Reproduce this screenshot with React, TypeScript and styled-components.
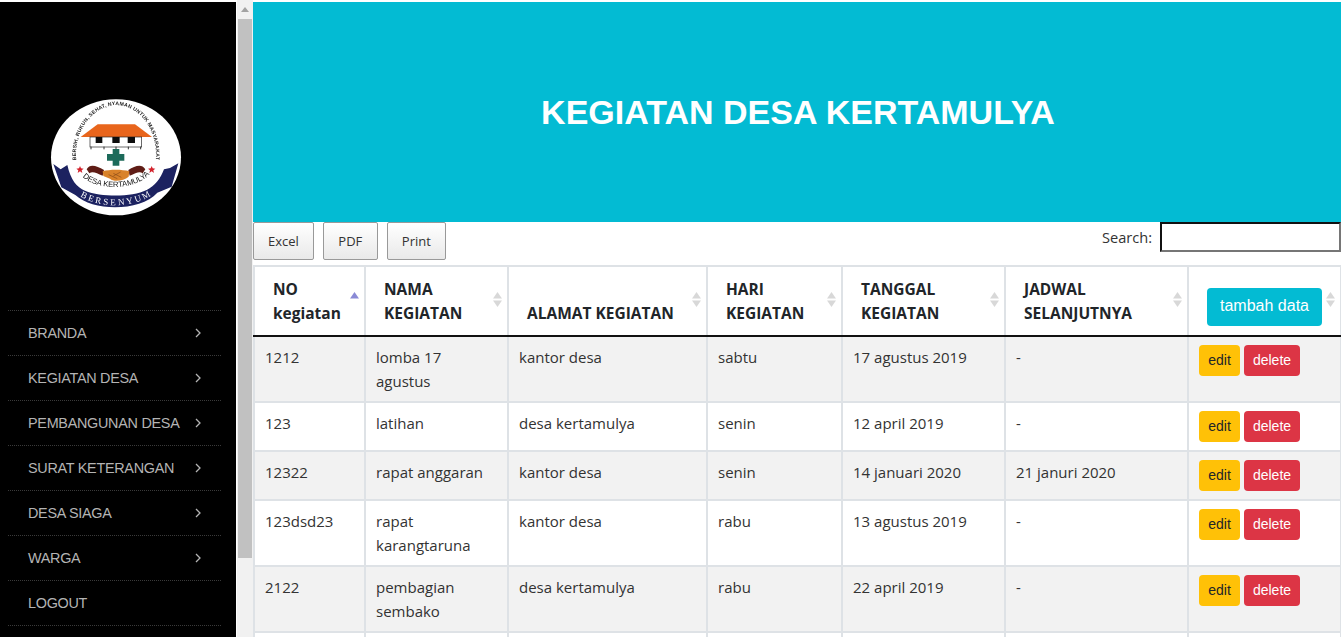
import React from 'react';
import styled, { createGlobalStyle } from 'styled-components';

const Global = createGlobalStyle`
  html, body { margin: 0; padding: 0; height: 637px; overflow: hidden; background: #fff; }
  * { box-sizing: border-box; }
`;
const Page = styled.div`
  display: flex; width: 1341px; height: 637px; overflow: hidden; background: #fff;
  font-family: "Open Sans", "Noto Sans", sans-serif; color: #212529;
`;
const Sidebar = styled.aside`
  flex: 0 0 236px; height: 635px; margin-top: 2px; background: #000; padding: 78px 15px 0 8px;
`;
const LogoBox = styled.div` height: 230px; margin-left: 22px; `;
const Nav = styled.nav` border-top: 1px dotted #3a3a3a; `;
const NavItem = styled.a`
  display: flex; align-items: center; justify-content: space-between; height: 45px;
  padding: 0 19px 0 20px; border-bottom: 1px dotted #3a3a3a;
  font: 14.4px "Liberation Sans", Arial, sans-serif; color: #b4b4b4; letter-spacing: -0.28px;
`;
const Scrollbar = styled.div`
  flex: 0 0 16px; margin-left: 1px; height: 637px; background: #f1f1f1; padding: 0 1px; position: relative;
`;
const ScrollArrow = styled.div`
  height: 19px; display: flex; align-items: center; justify-content: center;
`;
const ScrollThumb = styled.div` height: 539px; background: #c1c1c1; `;
const Main = styled.main` flex: 1; min-width: 0; `;
const Banner = styled.header`
  margin-top: 2px; height: 220px; background: #03bbd3; display: flex; align-items: center; justify-content: center;
  padding-left: 2px;
`;
const Title = styled.h1`
  margin: 0; font: bold 34px "Liberation Sans", Arial, sans-serif; color: #fff;
`;
const Toolbar = styled.div` display: flex; align-items: flex-start; height: 43px; `;
const ExportGroup = styled.div` display: flex; gap: 9px; flex: 1; `;
const ExportButton = styled.button`
  height: 38px; min-width: 55px; padding: 0 14px; border: 1px solid #999; border-radius: 2px;
  background: linear-gradient(to bottom, #fff 0%, #e9e9e9 100%);
  font: 13px "Open Sans", sans-serif; color: #333;
`;
const SearchLabel = styled.label`
  display: flex; align-items: flex-start; gap: 8px; font-size: 14.6px; color: #333; line-height: 30px;
`;
const SearchInput = styled.input`
  width: 181px; height: 30px; background: #fff; border: 2px solid; padding: 0; outline: 0;
  border-color: #111 #767676 #767676 #111;
`;
const Table = styled.table`
  table-layout: fixed; border-collapse: collapse; width: 1087px; margin-left: 0;
  font-size: 15px; line-height: 24px;
`;
const Head = styled.th`
  position: relative; border: 2px solid #dee2e6; border-bottom: 2px solid #111; text-align: left; vertical-align: bottom;
  padding: 8px 18px 10px 18px; font-weight: 700; height: 70px; color: #212529; font-size: 15.5px;
`;
const HeadButtonCell = styled(Head)` padding: 12px 18px 0 18px; vertical-align: middle; `;
const SortMark = styled.svg`
  position: absolute; right: 5px; top: 25px; width: 9px; height: 15px;
`;
const Row = styled.tr<{ $odd: boolean }>` background: ${p => (p.$odd ? '#f2f2f2' : '#fff')}; `;
const Cell = styled.td`
  border: 2px solid #dee2e6; padding: 8px 10px; vertical-align: top; color: #333;
`;
const ActionCell = styled(Cell)` padding: 8px 10px; white-space: nowrap; font-size: 0; line-height: 0; `;
const ActionButton = styled.button<{ $kind: 'info' | 'warn' | 'danger' }>`
  border: 0; border-radius: 4px; font-family: "Liberation Sans", Arial, sans-serif;
  background: ${p => (p.$kind === 'info' ? '#03bbd3' : p.$kind === 'warn' ? '#ffc107' : '#dc3545')};
  color: ${p => (p.$kind === 'warn' ? '#212529' : '#fff')};
  font-size: ${p => (p.$kind === 'info' ? '16px' : '14px')};
  height: ${p => (p.$kind === 'info' ? '38px' : '31px')};
  width: ${p => (p.$kind === 'info' ? '115px' : p.$kind === 'warn' ? '41px' : '56px')};
  margin-right: ${p => (p.$kind === 'warn' ? '4px' : '0')};
  padding: 0 0 2px;
`;

const Logo = () => (
  <svg width="170" height="150" viewBox="0 0 510 450" role="img" aria-label="Logo Desa Kertamulya">
    <defs>
      <filter id="soft"><feGaussianBlur stdDeviation="0.9" /></filter>
      <path id="arcTop" d="M139 242 C130 150 190 78 258 75 C330 78 385 150 377 242" />
      <path id="arcMid" d="M160 292 C200 332 315 332 357 284" />
      <path id="arcBot" d="M140 342 C200 388 320 388 378 335" />
    </defs>
    <g filter="url(#soft)">
      <ellipse cx="258" cy="232" rx="195" ry="174" fill="#fff" />
      <path d="M70 252 L92 268 L112 255 C122 300 140 322 165 332 C215 352 305 352 350 330 C375 318 392 295 402 268 L420 264 L445 250 L425 320 L382 338 C330 395 190 395 136 345 L94 322 Z" fill="#1a2060" />
      <path d="M152 171 L203 133 L315 133 L366 171 Z" fill="#e8651a" />
      <rect x="180" y="171" width="155" height="30" fill="#fff" stroke="#222" strokeWidth="2" />
      <rect x="197" y="171" width="20" height="18" fill="#111" />
      <rect x="247" y="171" width="22" height="18" fill="#111" />
      <rect x="293" y="171" width="22" height="18" fill="#111" />
      <path d="M183 200 V208 M222 200 V208 M258 200 V208 M295 200 V208 M332 200 V208" stroke="#333" strokeWidth="3" />
      <path d="M248 207 H268 V222 H283 V242 H268 V257 H248 V242 H231 V222 H248 Z" fill="#1f6b5a" />
      <path d="M170 268 C180 250 200 258 222 270 L218 287 C200 280 188 272 178 280 Z" fill="#5e1f14" />
      <path d="M346 268 C335 250 315 258 295 270 L299 287 C318 280 328 272 338 280 Z" fill="#5e1f14" />
      <path d="M218 274 C240 268 275 268 298 274 L296 290 C280 304 250 306 240 296 L220 288 Z" fill="#d9822b" />
      <path d="M236 284 L262 296 M250 280 L274 292 M272 276 L250 288" stroke="#8a4a16" strokeWidth="2" />
      <path d="M150 258 L153 265 L161 266 L155 271 L157 279 L150 274 L143 279 L145 271 L139 266 L147 265 Z" fill="#d3212c" />
      <path d="M365 258 L368 265 L376 266 L370 271 L372 279 L365 274 L358 279 L360 271 L354 266 L362 265 Z" fill="#d3212c" />
      <text fontFamily="Liberation Sans, sans-serif" fontSize="15.5" fontWeight="700" fill="#222" letterSpacing="0.6">
        <textPath href="#arcTop" startOffset="50%" textAnchor="middle">BERSIH, RUKUN, SEHAT, NYAMAN UNTUK MASYARAKAT</textPath>
      </text>
      <text fontFamily="Liberation Sans, sans-serif" fontSize="23" fontWeight="400" fill="#111">
        <textPath href="#arcMid" startOffset="50%" textAnchor="middle">DESA KERTAMULYA</textPath>
      </text>
      <text fontFamily="Liberation Serif, serif" fontSize="27" fill="#fff" letterSpacing="7">
        <textPath href="#arcBot" startOffset="50%" textAnchor="middle">BERSENYUM</textPath>
      </text>
    </g>
  </svg>
);

const Chevron = () => (
  <svg width="8" height="10" viewBox="0 0 8 10" fill="none" stroke="#b4b4b4" strokeWidth="1.3">
    <path d="M2 1 L6 5 L2 9" />
  </svg>
);

const Sort = ({ active }: { active?: boolean }) => (
  <SortMark viewBox="0 0 9 15">
    <path d="M4.5 0 L9 6.5 H0 Z" fill={active ? '#8a8ad6' : '#d8d8d8'} />
    {!active && <path d="M4.5 15 L9 8.5 H0 Z" fill="#d8d8d8" />}
  </SortMark>
);

const menu = ['BRANDA', 'KEGIATAN DESA', 'PEMBANGUNAN DESA', 'SURAT KETERANGAN', 'DESA SIAGA', 'WARGA', 'LOGOUT'];
const widths = [111, 143, 199, 135, 163, 183, 153];
const heads: React.ReactNode[] = [
  <>NO<br />kegiatan</>,
  <>NAMA<br />KEGIATAN</>,
  'ALAMAT KEGIATAN',
  <>HARI<br />KEGIATAN</>,
  <>TANGGAL<br />KEGIATAN</>,
  <>JADWAL<br />SELANJUTNYA</>,
];
const rows: string[][] = [
  ['1212', 'lomba 17 agustus', 'kantor desa', 'sabtu', '17 agustus 2019', '-'],
  ['123', 'latihan', 'desa kertamulya', 'senin', '12 april 2019', '-'],
  ['12322', 'rapat anggaran', 'kantor desa', 'senin', '14 januari 2020', '21 januri 2020'],
  ['123dsd23', 'rapat karangtaruna', 'kantor desa', 'rabu', '13 agustus 2019', '-'],
  ['2122', 'pembagian sembako', 'desa kertamulya', 'rabu', '22 april 2019', '-'],
];

export default function App() {
  return (
    <Page>
      <Global />
      <Sidebar>
        <LogoBox><Logo /></LogoBox>
        <Nav>
          {menu.map(m => (
            <NavItem key={m}>{m}{m !== 'LOGOUT' && <Chevron />}</NavItem>
          ))}
        </Nav>
      </Sidebar>
      <Scrollbar>
        <ScrollArrow>
          <svg width="8" height="5" viewBox="0 0 8 5"><path d="M4 0 L8 5 H0 Z" fill="#a3a3a3" /></svg>
        </ScrollArrow>
        <ScrollThumb />
      </Scrollbar>
      <Main>
        <Banner><Title>KEGIATAN DESA KERTAMULYA</Title></Banner>
        <Toolbar>
          <ExportGroup>
            <ExportButton>Excel</ExportButton>
            <ExportButton>PDF</ExportButton>
            <ExportButton>Print</ExportButton>
          </ExportGroup>
          <SearchLabel>Search:<SearchInput /></SearchLabel>
        </Toolbar>
        <Table>
          <colgroup>{widths.map((w, i) => <col key={i} style={{ width: w }} />)}</colgroup>
          <thead>
            <tr>
              {heads.map((h, i) => <Head key={i}>{h}<Sort active={i === 0} /></Head>)}
              <HeadButtonCell><ActionButton $kind="info">tambah data</ActionButton><Sort /></HeadButtonCell>
            </tr>
          </thead>
          <tbody>
            {rows.map((r, i) => (
              <Row key={r[0]} $odd={i % 2 === 0}>
                {r.map((c, j) => <Cell key={j}>{c}</Cell>)}
                <ActionCell>
                  <ActionButton $kind="warn">edit</ActionButton>
                  <ActionButton $kind="danger">delete</ActionButton>
                </ActionCell>
              </Row>
            ))}
            <Row $odd={false}>
              {widths.map((_, j) => <Cell key={j}>&nbsp;</Cell>)}
            </Row>
          </tbody>
        </Table>
      </Main>
    </Page>
  );
}
